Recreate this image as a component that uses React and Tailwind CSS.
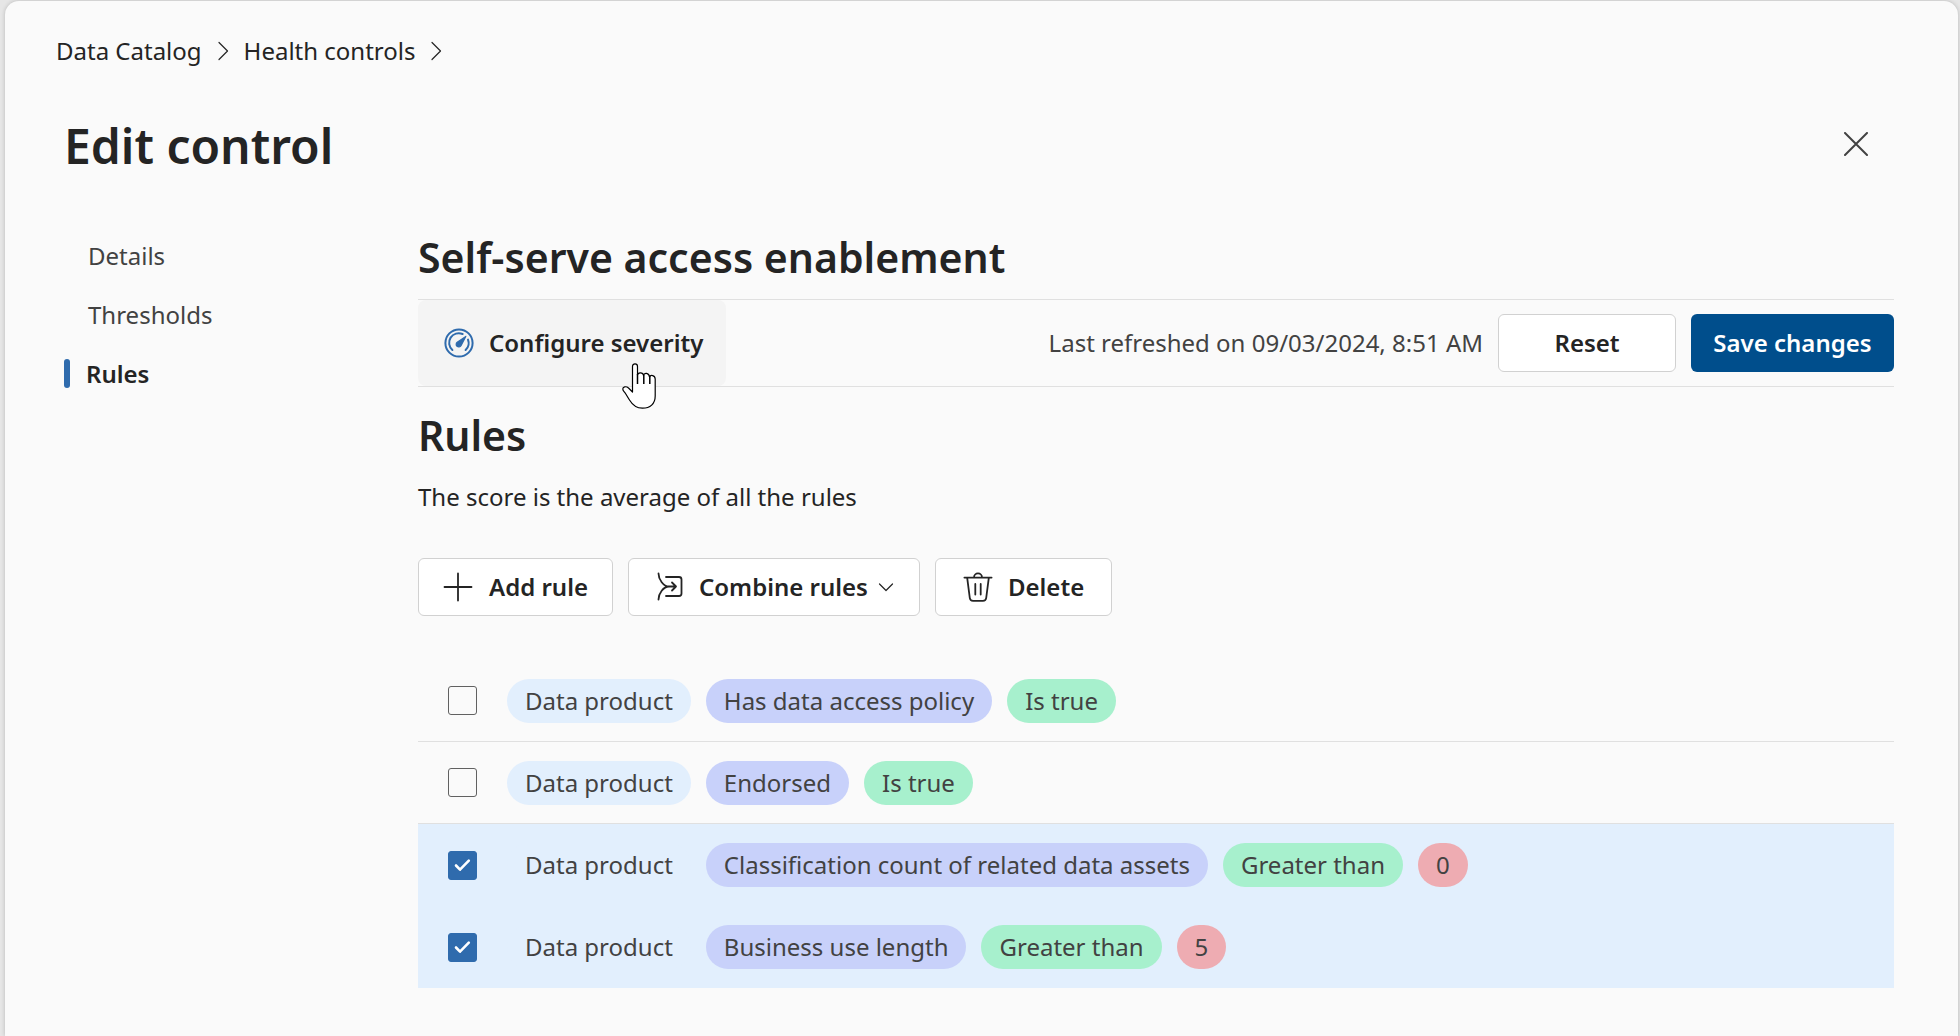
import { useState } from "react";

const line = { fill: "none", stroke: "currentColor", strokeLinecap: "round", strokeLinejoin: "round" };

function Chevron({ className, d }) {
  return (
    <svg viewBox="0 0 20 20" className={className} {...line} strokeWidth="1.2" aria-hidden="true">
      <path d={d} />
    </svg>
  );
}

function GaugeIcon() {
  return (
    <svg viewBox="0 0 30 30" className="size-[30px] shrink-0 text-[#2f6bad]" {...line} strokeWidth="2" aria-hidden="true">
      <circle cx="15" cy="15" r="13.6" />
      <path d="M8.4 22A9.6 9.6 0 0 1 18.6 6M24 11.6A9.6 9.6 0 0 1 21.6 22" />
      <path d="M21.8 8.4 13.2 14.2a2.6 2.6 0 1 0 3.8 3.4Z" fill="currentColor" strokeWidth="1.2" />
    </svg>
  );
}

function PlusIcon() {
  return (
    <svg viewBox="0 0 30 30" className="size-[30px] shrink-0" {...line} strokeWidth="1.8" aria-hidden="true">
      <path d="M15 1.5v27M1.5 15h27" />
    </svg>
  );
}

function CombineIcon() {
  return (
    <svg viewBox="0 0 30 30" className="size-[30px] shrink-0" {...line} strokeWidth="1.8" aria-hidden="true">
      <path d="M3.5 1.5C3.5 7.5 8.5 14.5 14 14.5H21M3.500 27.500C3.500 21.500 8.500 14.500 14 14.500M17 10.500 21 14.500 17 18.500" />
      <path d="M11 5H24a2.500 2.500 0 0 1 2.500 2.500v14a2.500 2.500 0 0 1-2.500 2.500H11" />
    </svg>
  );
}

function TrashIcon() {
  return (
    <svg viewBox="0 0 30 30" className="size-[30px] shrink-0" {...line} strokeWidth="1.8" aria-hidden="true">
      <path d="M1.4 5.6h27.2M11 5.4a4 4 0 0 1 8 0M4.2 5.8 6.8 26a3.3 3.3 0 0 0 3.3 2.9h9.8a3.3 3.3 0 0 0 3.3-2.9L25.8 5.8M12.3 12v10.5M17.7 12v10.5" />
    </svg>
  );
}

function HandCursor() {
  return (
    <svg viewBox="0 0 34 46" className="pointer-events-none absolute top-[63px] left-[204px] z-10 h-[46px] w-[34px]" fill="#fff" stroke="#000" strokeWidth="1.2" strokeLinejoin="round" aria-hidden="true">
      <path d="M10.5 29V3.5C10.5 0 15.5 0 15.5 3.5V12C16 9 21 9 21.5 12.5C22 9.5 27 9.5 27.5 14C28.5 11.5 33 12 33.2 16V33C33.2 41 28 45.2 20.5 45.2C14 45.2 10.5 42 7.5 37L3.5 30.5C2.5 29 .8 28 .8 26C.8 23.8 4 22.8 6.5 25Z" />
      <path d="M15.5 11v10M21.8 12v9M27.8 13v8" strokeWidth="1.5" />
    </svg>
  );
}

const tones = {
  blue: "bg-[#e2effd]",
  violet: "bg-[#c8d1fa]",
  green: "bg-[#a7f0cd]",
  red: "bg-[#eeacb2]",
};

const initialRules = [
  { id: 1, checked: false, chips: [["blue", "Data product"], ["violet", "Has data access policy"], ["green", "Is true"]] },
  { id: 2, checked: false, chips: [["blue", "Data product"], ["violet", "Endorsed"], ["green", "Is true"]] },
  { id: 3, checked: true, chips: [["blue", "Data product"], ["violet", "Classification count of related data assets"], ["green", "Greater than"], ["red", "0"]] },
  { id: 4, checked: true, chips: [["blue", "Data product"], ["violet", "Business use length"], ["green", "Greater than"], ["red", "5"]] },
];

function RuleRow({ rule, onToggle }) {
  const label = rule.chips.map((c) => c[1]).join(" ");
  return (
    <li className={rule.checked ? "flex h-[82px] items-center bg-[#e2effd] pl-[30px]" : "flex h-[82px] items-center border-b border-[#e0e0e0] pl-[30px]"}>
      <span className="relative mr-[30px] flex size-[29px] shrink-0">
        <input
          type="checkbox"
          aria-label={label}
          checked={rule.checked}
          onChange={onToggle}
          className="size-full appearance-none rounded-[3px] border border-[#616161] checked:border-[#2f6bad] checked:bg-[#2f6bad]"
        />
        {rule.checked && (
          <svg viewBox="0 0 29 29" className="pointer-events-none absolute inset-0" {...line} stroke="#fff" strokeWidth="2.6" aria-hidden="true">
            <path d="m8 14.5 4 4.2 8.8-9" />
          </svg>
        )}
      </span>
      <div className="flex flex-wrap gap-[15px]">
        {rule.chips.map(([tone, text]) => (
          <span key={text} className={`${tones[tone]} flex h-[44px] items-center rounded-full px-[18px] whitespace-nowrap text-[#424242]`}>
            {text}
          </span>
        ))}
      </div>
    </li>
  );
}

const outline = "flex h-[58px] items-center rounded-md border border-[#d1d1d1] bg-white font-semibold whitespace-nowrap";

export default function App() {
  const [rules, setRules] = useState(initialRules);
  const toggle = (id) => setRules(rules.map((r) => (r.id === id ? { ...r, checked: !r.checked } : r)));

  return (
    <div className="min-h-screen bg-[#e6e6e6] pt-px pr-[2px] pl-[5px] font-['Noto_Sans','Open_Sans',sans-serif] text-[24px] leading-8 text-[#242424]">
      <div className="min-h-[1035px] rounded-t-[14px] bg-[#fafafa] pb-12 shadow-[0_0_4px_rgba(0,0,0,0.2)]">
        <nav aria-label="Breadcrumb" className="flex items-center pt-[34px] pl-[51px]">
          <a href="#catalog">Data Catalog</a>
          <Chevron className="mx-[11px] size-5" d="m6 1.5 8.5 8.5L6 18.5" />
          <a href="#controls">Health controls</a>
          <Chevron className="mx-[11px] size-5" d="m6 1.5 8.5 8.5L6 18.5" />
        </nav>

        <header className="flex items-start justify-between pt-[47px] pr-[90px] pl-[59px]">
          <h1 className="text-[48px] leading-[64px] font-semibold">Edit control</h1>
          <button type="button" aria-label="Close" className="pt-[18px] text-[#424242]">
            <svg viewBox="0 0 24 24" className="size-6" {...line} strokeWidth="2" aria-hidden="true">
              <path d="m1 1 22 22M23 1 1 23" />
            </svg>
          </button>
        </header>

        <div className="flex pt-[44px] pr-[64px] pl-[59px]">
          <nav aria-label="Sections" className="w-[354px] shrink-0 pt-[4px]">
            <ul className="text-[#424242]">
              <li className="flex h-[59px] items-center pl-[24px]"><a href="#details">Details</a></li>
              <li className="flex h-[59px] items-center pl-[24px]"><a href="#thresholds">Thresholds</a></li>
              <li className="flex h-[59px] items-center gap-4 font-semibold text-[#242424]">
                <span className="h-[29px] w-[6px] rounded-full bg-[#2f6bad]" />
                <a href="#rules" aria-current="page">Rules</a>
              </li>
            </ul>
          </nav>

          <main className="min-w-0 flex-1">
            <h2 className="pt-[9px] text-[41px] leading-[52px] font-semibold">Self-serve access enablement</h2>
            <div className="relative mt-4 flex h-[88px] items-center border-y border-[#e0e0e0]">
              <button type="button" className="flex h-full items-center gap-[15px] rounded-lg bg-[#f4f4f4] pr-[23px] pl-[26px] font-semibold whitespace-nowrap">
                <GaugeIcon />
                Configure severity
              </button>
              <HandCursor />
              <p className="ml-auto whitespace-nowrap text-[#424242]">Last refreshed on 09/03/2024, 8:51 AM</p>
              <button type="button" className={`${outline} ml-[15px] w-[178px] justify-center`}>Reset</button>
              <button type="button" className="ml-[15px] h-[58px] w-[203px] rounded-md bg-[#004e8c] font-semibold whitespace-nowrap text-white">Save changes</button>
            </div>

            <h2 className="pt-[22px] text-[41px] leading-[52px] font-semibold">Rules</h2>
            <p className="pt-[20px]">The score is the average of all the rules</p>

            <div className="flex gap-[15px] pt-[45px]">
              <button type="button" className={`${outline} gap-4 px-[24px]`}><PlusIcon />Add rule</button>
              <button type="button" className={`${outline} gap-[14px] pr-[23px] pl-[26px]`}>
                <CombineIcon />
                <span className="flex items-center gap-2">
                  Combine rules
                  <Chevron className="size-5" d="m3.5 7 6.5 6.5L16.5 7" />
                </span>
              </button>
              <button type="button" className={`${outline} gap-[15px] px-[27px]`}><TrashIcon />Delete</button>
            </div>

            <ul className="pt-[44px]">
              {rules.map((r) => (
                <RuleRow key={r.id} rule={r} onToggle={() => toggle(r.id)} />
              ))}
            </ul>
          </main>
        </div>
      </div>
    </div>
  );
}
